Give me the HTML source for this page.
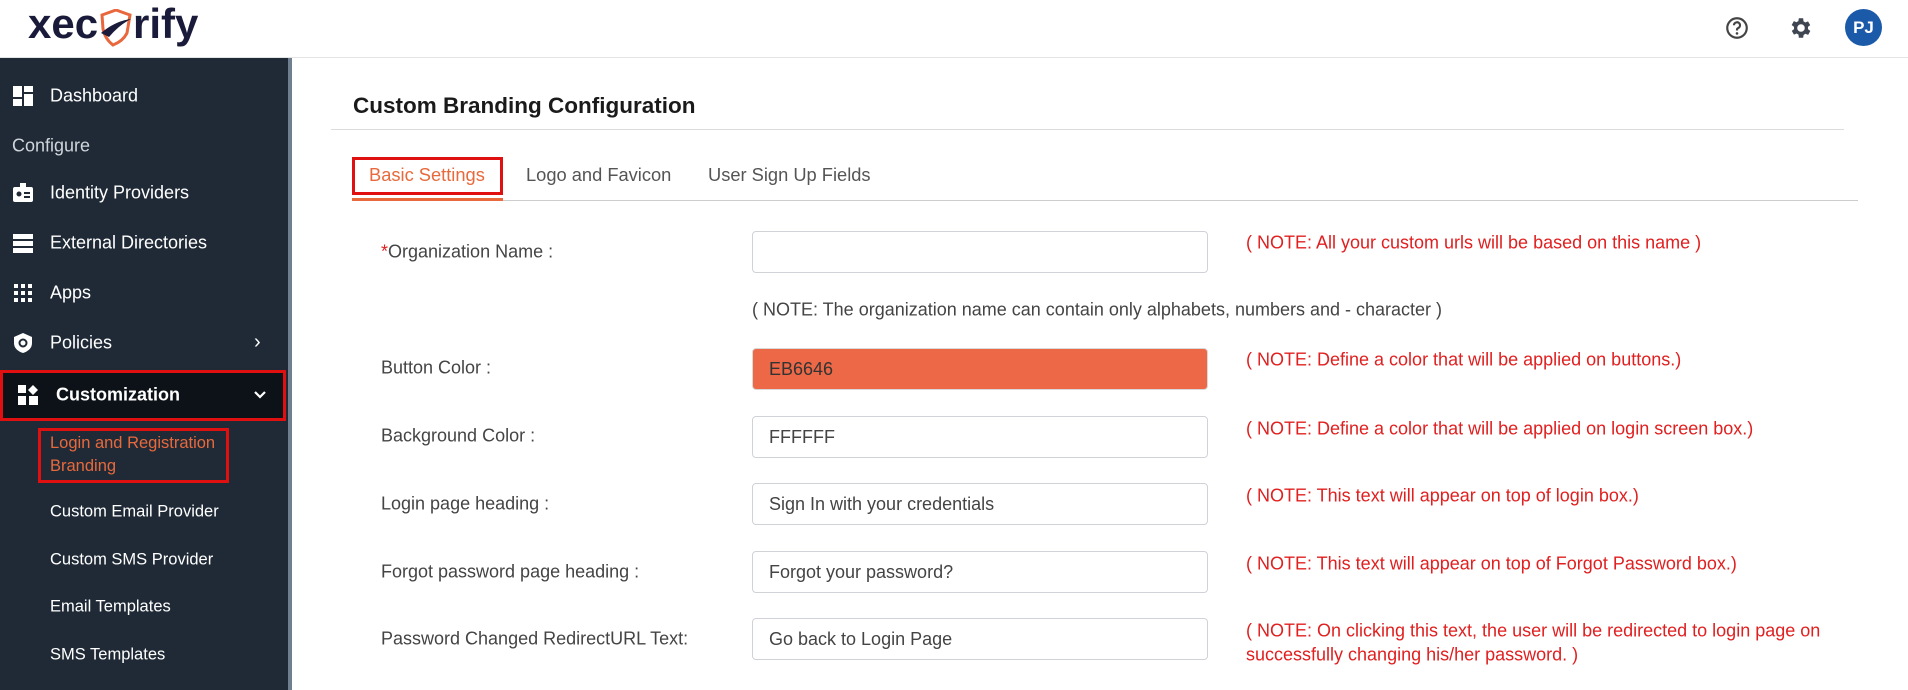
<!DOCTYPE html>
<html><head><meta charset="utf-8"><style>
*{box-sizing:border-box;margin:0;padding:0}
body{width:1908px;height:690px;overflow:hidden;background:#fff;font-family:"Liberation Sans",sans-serif;position:relative;color:#333}
.abs{position:absolute;white-space:nowrap}
#hdr{position:absolute;left:0;top:0;width:1908px;height:58px;background:#fff;border-bottom:1px solid #e3e3e3}
#side{position:absolute;left:0;top:58px;width:288px;height:632px;background:#1f2a36}
#sbar{position:absolute;left:288px;top:58px;width:4px;height:632px;background:#6f7f90}
.nav{position:absolute;left:50px;color:#fff;font-size:18px;transform:translateY(-50%)}
.sub{position:absolute;left:50px;color:#fff;font-size:16.5px;transform:translateY(-50%)}
.ico{position:absolute;left:13px;width:20px;height:20px;transform:translateY(-50%)}
.lbl{position:absolute;left:381px;font-size:18px;color:#444;transform:translateY(-50%)}
.inp{position:absolute;left:752px;width:456px;height:42px;border:1px solid #cfd3d8;border-radius:4px;font-size:18px;color:#444;padding:10px 16px}
.note{position:absolute;left:1246px;font-size:18px;color:#e02020;transform:translateY(-50%)}
.logo{position:absolute;top:3px;font-size:42px;line-height:42px;font-weight:bold;color:#1a1a3a}
</style></head><body>
<div id="hdr">
 <div class="logo" style="left:28px">xec</div>
 <div class="logo" style="left:133px">rify</div>
 <svg class="abs" style="left:99px;top:9px" width="34" height="38" viewBox="0 0 34 38"><path d="M3 6 L17 1 L31 6 L28 24 Q24 32 14 36 Q6 30 4 20 Z" fill="none" stroke="#e8673c" stroke-width="3"/><path d="M2 24 Q16 12 32 10 Q20 16 10 28 Z" fill="#1a1a3a"/></svg>
 <svg class="abs" style="left:1724px;top:15px" width="26" height="26" viewBox="0 0 24 24"><circle cx="12" cy="12" r="9" fill="none" stroke="#444" stroke-width="2"/><path d="M9.2 9.5a2.8 2.8 0 1 1 3.8 2.6c-.7.3-1 .8-1 1.6v.6" fill="none" stroke="#444" stroke-width="2"/><circle cx="12" cy="17" r="1.2" fill="#444"/></svg>
 <svg class="abs" style="left:1788px;top:15px" width="26" height="26" viewBox="0 0 24 24"><path fill="#3f4652" d="M19.4 13a7.6 7.6 0 0 0 0-2l2.1-1.6-2-3.5-2.5 1a7.4 7.4 0 0 0-1.7-1L15 3h-4l-.4 2.7a7.4 7.4 0 0 0-1.7 1l-2.5-1-2 3.5L6.6 11a7.6 7.6 0 0 0 0 2l-2.1 1.6 2 3.5 2.5-1c.5.4 1.1.7 1.7 1L11 21h4l.4-2.7c.6-.3 1.2-.6 1.7-1l2.5 1 2-3.5zM13 15.5a3.5 3.5 0 1 1 0-7 3.5 3.5 0 0 1 0 7z" transform="translate(-1 0)"/></svg>
 <div class="abs" style="left:1845px;top:9px;width:37px;height:37px;border-radius:50%;background:#1b5aa8;color:#fff;font-weight:bold;font-size:17px;text-align:center;line-height:37px">PJ</div>
</div>
<div id="side"></div>
<div id="sbar"></div>
<svg class="ico" style="top:96px" viewBox="0 0 20 20"><rect x="0" y="0" width="9" height="11" fill="#fff"/><rect x="11" y="0" width="9" height="6" fill="#fff"/><rect x="0" y="13" width="9" height="7" fill="#fff"/><rect x="11" y="8" width="9" height="12" fill="#fff"/></svg>
<div class="nav" style="top:96px">Dashboard</div>
<div class="nav" style="top:146px;left:12px;color:#cfd5db">Configure</div>
<svg class="ico" style="top:193px" viewBox="0 0 20 20"><rect x="0" y="4" width="20" height="15" rx="2" fill="#fff"/><rect x="7" y="0" width="6" height="6" fill="#fff"/><circle cx="6" cy="11" r="2.5" fill="#1f2a36"/><rect x="11" y="9" width="6" height="2" fill="#1f2a36"/><rect x="11" y="13" width="6" height="2" fill="#1f2a36"/></svg>
<div class="nav" style="top:193px">Identity Providers</div>
<svg class="ico" style="top:243px" viewBox="0 0 20 20"><rect x="0" y="1" width="20" height="5" fill="#fff"/><rect x="0" y="8" width="20" height="5" fill="#fff"/><rect x="0" y="15" width="20" height="5" fill="#fff"/></svg>
<div class="nav" style="top:243px">External Directories</div>
<svg class="ico" style="top:293px" viewBox="0 0 20 20" fill="#fff"><rect x="1" y="1" width="4" height="4"/><rect x="8" y="1" width="4" height="4"/><rect x="15" y="1" width="4" height="4"/><rect x="1" y="8" width="4" height="4"/><rect x="8" y="8" width="4" height="4"/><rect x="15" y="8" width="4" height="4"/><rect x="1" y="15" width="4" height="4"/><rect x="8" y="15" width="4" height="4"/><rect x="15" y="15" width="4" height="4"/></svg>
<div class="nav" style="top:293px">Apps</div>
<svg class="ico" style="top:343px" viewBox="0 0 20 20"><path d="M10 0 L19 4 V10 Q19 17 10 20 Q1 17 1 10 V4Z" fill="#fff"/><circle cx="10" cy="10" r="3.5" fill="none" stroke="#1f2a36" stroke-width="2"/></svg>
<div class="nav" style="top:343px">Policies</div>
<div class="abs" style="left:254px;top:331px;color:#fff;font-size:20px">›</div>
<div class="abs" style="left:0;top:370px;width:286px;height:51px;background:#0d1218;border:3px solid #e01010"></div>
<svg class="ico" style="top:395px;left:18px" viewBox="0 0 20 20" fill="#fff"><rect x="0" y="0" width="8" height="8"/><path d="M15 0 L20 5 L15 10 L10 5Z"/><rect x="0" y="11" width="8" height="9"/><rect x="11" y="11" width="9" height="9"/></svg>
<div class="nav" style="top:395px;left:56px;font-weight:bold">Customization</div>
<svg class="abs" style="left:254px;top:390px" width="12" height="10" viewBox="0 0 12 10"><path d="M1 2 L6 7 L11 2" fill="none" stroke="#fff" stroke-width="2.2"/></svg>
<div class="abs" style="left:38px;top:428px;width:191px;height:55px;border:3px solid #e01010"></div>
<div class="abs" style="left:50px;top:432px;color:#e8693c;font-size:16.5px;line-height:23px;white-space:normal;width:180px">Login and Registration<br>Branding</div>
<div class="sub" style="top:512px">Custom Email Provider</div>
<div class="sub" style="top:560px">Custom SMS Provider</div>
<div class="sub" style="top:607px">Email Templates</div>
<div class="sub" style="top:655px">SMS Templates</div>

<div class="abs" style="left:353px;top:93px;font-size:22.5px;font-weight:bold;color:#1a1a1a">Custom Branding Configuration</div>
<div class="abs" style="left:331px;top:129px;width:1513px;height:1px;background:#dcdcdc"></div>
<div class="abs" style="left:352px;top:157px;width:151px;height:38px;border:3px solid #e01010"></div>
<div class="abs" style="left:369px;top:164px;font-size:18.3px;color:#e8693c">Basic Settings</div>
<div class="abs" style="left:526px;top:164px;font-size:18.3px;color:#555">Logo and Favicon</div>
<div class="abs" style="left:708px;top:164px;font-size:18.3px;color:#555">User Sign Up Fields</div>
<div class="abs" style="left:352px;top:200px;width:1506px;height:1px;background:#ccc"></div>
<div class="abs" style="left:352px;top:198px;width:151px;height:3px;background:#e8693c"></div>

<div class="lbl" style="top:252px"><span style="color:#e02020">*</span>Organization Name :</div>
<div class="inp" style="top:231px"></div>
<div class="note" style="top:243px">( NOTE: All your custom urls will be based on this name )</div>
<div class="lbl" style="left:752px;top:310px">( NOTE: The organization name can contain only alphabets, numbers and - character )</div>

<div class="lbl" style="top:368px">Button Color :</div>
<div class="inp" style="top:348px;background:#ec6846;border-color:#d9d9d9;color:#333">EB6646</div>
<div class="note" style="top:360px">( NOTE: Define a color that will be applied on buttons.)</div>

<div class="lbl" style="top:436px">Background Color :</div>
<div class="inp" style="top:416px">FFFFFF</div>
<div class="note" style="top:429px">( NOTE: Define a color that will be applied on login screen box.)</div>

<div class="lbl" style="top:504px">Login page heading :</div>
<div class="inp" style="top:483px">Sign In with your credentials</div>
<div class="note" style="top:496px">( NOTE: This text will appear on top of login box.)</div>

<div class="lbl" style="top:572px">Forgot password page heading :</div>
<div class="inp" style="top:551px">Forgot your password?</div>
<div class="note" style="top:564px">( NOTE: This text will appear on top of Forgot Password box.)</div>

<div class="lbl" style="top:639px">Password Changed RedirectURL Text:</div>
<div class="inp" style="top:618px">Go back to Login Page</div>
<div class="note" style="top:631px">( NOTE: On clicking this text, the user will be redirected to login page on</div>
<div class="note" style="top:655px">successfully changing his/her password. )</div>
</body></html>
